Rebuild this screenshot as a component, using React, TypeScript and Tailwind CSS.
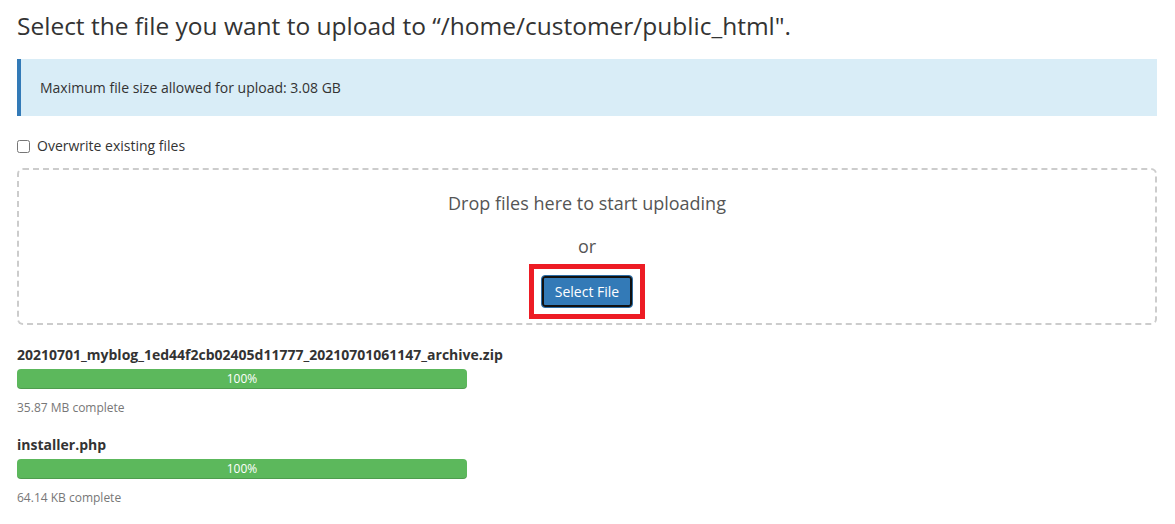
import React from "react";

const files = [
  { name: "20210701_myblog_1ed44f2cb02405d11777_20210701061147_archive.zip", size: "35.87 MB complete" },
  { name: "installer.php", size: "64.14 KB complete" },
];

export default function App() {
  return (
    <div className="min-h-[524px] bg-white px-[17px] pt-[9px] text-[#333] font-['Open_Sans',sans-serif]">
      <h1 className="text-[24.5px] leading-[34px] font-normal">
        Select the file you want to upload to “/home/customer/public_html".
      </h1>

      <div className="mt-[16px] h-[57px] w-[1140px] flex items-center bg-[#d9edf7] border-l-[4px] border-[#337ab7] pl-[19px] text-[14px]">
        Maximum file size allowed for upload: 3.08 GB
      </div>

      <label className="mt-[20px] flex items-center gap-[7px] text-[14px] leading-[20px]">
        <input type="checkbox" className="w-[13px] h-[13px] m-0" />
        Overwrite existing files
      </label>

      <div className="mt-[12px] w-[1140px] h-[157px] border-2 border-dashed border-[#ccc] rounded-[6px] flex flex-col items-center text-[#555]">
        <div className="mt-[20px] text-[18px] leading-[26px]">Drop files here to start uploading</div>
        <div className="mt-[17px] text-[18px] leading-[26px]">or</div>
        <div className="mt-[5px] border-[5px] border-[#ed1c24] px-[7px] py-[6px]">
          <button className="h-[33px] px-[13px] rounded-[4px] bg-[#337ab7] border border-[#2e6da4] shadow-[inset_0_0_0_2px_#111] text-white text-[14px] leading-[20px]">
            Select File
          </button>
        </div>
      </div>

      <div className="mt-[20px] w-[450px]">
        {files.map((f, i) => (
          <div key={i} className={i ? "mt-[18px]" : ""}>
            <div className="text-[14px] leading-[20px] font-bold text-[#333]">{f.name}</div>
            <div className="mt-[4px] h-[20px] rounded-[4px] bg-[#5cb85c] shadow-[inset_0_-1px_0_rgba(0,0,0,0.15)] text-white text-[12px] leading-[20px] text-center">
              100%
            </div>
            <div className="mt-[10px] text-[12px] leading-[18px] text-[#777]">{f.size}</div>
          </div>
        ))}
      </div>
    </div>
  );
}
